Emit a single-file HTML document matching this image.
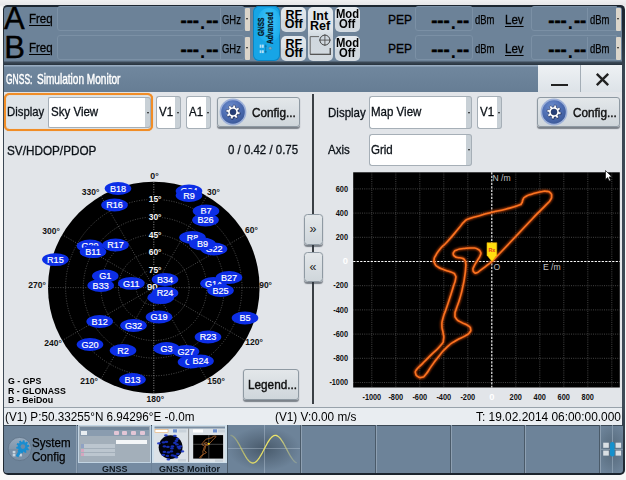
<!DOCTYPE html>
<html><head><meta charset="utf-8"><title>GNSS Simulation Monitor</title>
<style>
html,body{margin:0;padding:0;background:#f8f8f8;}
body{width:626px;height:480px;position:relative;overflow:hidden;font-family:"Liberation Sans",sans-serif;color:#000;}
#root,#root div,#root span,#root svg{position:absolute;}
#root{left:0;top:0;width:626px;height:480px;overflow:hidden;}
.t{white-space:nowrap;line-height:1;transform-origin:0 0;}
.fld{border:1px solid #7b90a5;border-radius:3px;background:#6c8298;box-sizing:border-box;}
.hbtn{background:linear-gradient(#e4e9ed 0%,#dde3e8 45%,#cfd7de 55%,#d3dae0 100%);border-radius:5px;box-sizing:border-box;}
.hbtn .t{font-weight:bold;font-size:12.5px;}
.beige{background:#dbd5ca;border-radius:1px;}
.combo{background:#fff;border:1px solid #a6afb7;box-sizing:border-box;border-radius:2px;}
.carr{background:#c8d0d6;border:1px solid #a6afb7;border-left:none;box-sizing:border-box;border-radius:0 3px 3px 0;}
.btn{background:linear-gradient(#e3e7ea,#cfd6db);border:1px solid #8f9aa3;border-radius:3px;box-sizing:border-box;box-shadow:0 1.5px 1px rgba(40,50,60,.55);}
.dash{font-weight:bold;font-size:18.5px;-webkit-text-stroke:.4px #000;margin-top:.4px;}
.unit{font-size:12.3px;transform:scaleX(.77);-webkit-text-stroke:.25px #000;}
.lbl{font-size:12px;transform:scaleX(.96);-webkit-text-stroke:.3px #000;text-underline-offset:1.8px;text-decoration-thickness:1px;}
.pl{font-size:12.4px;transform:scaleX(.93);-webkit-text-stroke:.3px #0c1218;color:#0c1218;}
.cfg{font-size:12.2px;transform:scaleX(.965);-webkit-text-stroke:.42px #111;color:#111;}
svg text{font-family:"Liberation Sans",sans-serif;}
</style></head><body>
<div id="root">
<!-- FRAME -->
<div style="left:0;top:0;width:626px;height:7px;background:linear-gradient(#f0f0f1,#e6e6e8 70%,#f8f8f8);"></div>
<div style="left:3.1px;top:5px;width:621.5px;height:469.6px;background:linear-gradient(to bottom,#1c2630 0,#1f2933 20px,#3a4652 66px,#3f4b57 400px,#2a3540 440px,#1a232c 100%);border-radius:4.5px 4.5px 5px 5px;"></div>
<div style="left:4.2px;top:6.6px;width:617.8px;height:466.4px;background:#6d8399;border-radius:3px 3px 3px 3px;"></div>

<div id="hdr" style="left:0;top:0;width:626px;height:66px;">
<div class="t " style="left:4.1px;top:3.2px;font-size:31px;-webkit-text-stroke:.4px #000;">A</div>
<div class="t " style="left:4.2px;top:32.4px;font-size:31px;-webkit-text-stroke:.4px #000;">B</div>
<div class="fld" style="left:57px;top:6.4px;width:188px;height:25px;"></div>
<div style="left:220px;top:8px;width:1px;height:23px;background:#7b90a5;"></div>
<div class="t dash" style="left:180.5px;top:11.5px;">---<span style="position:relative;top:1.7px;padding:0 1px 0 1px;-webkit-text-stroke:0;">.</span>--</div>
<div class="t unit" style="left:222px;top:14px;">GHz</div>
<div class="beige" style="left:244.5px;top:8px;width:5.5px;height:23px;"></div>
<div style="left:246px;top:18px;width:0;height:0;border-left:1.5px solid transparent;border-right:1.5px solid transparent;border-top:2px solid #222;"></div>
<div class="t lbl" style="left:388px;top:13.8px;transform:scaleX(1);font-size:12px;">PEP</div>
<div class="fld" style="left:415px;top:6.4px;width:58px;height:25px;"></div>
<div class="t dash" style="left:431.2px;top:11.5px;">---<span style="position:relative;top:1.7px;padding:0 1px 0 1px;-webkit-text-stroke:0;">.</span>--</div>
<div class="t unit" style="left:475px;top:14px;">dBm</div>
<div class="t lbl" style="left:505px;top:13.5px;text-decoration:underline;">Lev</div>
<div class="fld" style="left:531px;top:6.4px;width:86px;height:25px;border-radius:3px 0 0 3px;"></div>
<div style="left:587px;top:8px;width:1px;height:23px;background:#7b90a5;"></div>
<div class="t dash" style="left:548.3px;top:11.5px;">---<span style="position:relative;top:1.7px;padding:0 1px 0 1px;-webkit-text-stroke:0;">.</span>--</div>
<div class="t unit" style="left:589.6px;top:14px;">dBm</div>
<div class="beige" style="left:616px;top:7.7px;width:5.2px;height:23px;"></div>
<div style="left:617.3px;top:18px;width:0;height:0;border-left:1.5px solid transparent;border-right:1.5px solid transparent;border-top:2px solid #222;"></div>
<div class="t lbl" style="left:28.8px;top:12.9px;text-decoration:underline;">Freq</div>
<div class="fld" style="left:57px;top:35.4px;width:188px;height:25px;"></div>
<div style="left:220px;top:37px;width:1px;height:23px;background:#7b90a5;"></div>
<div class="t dash" style="left:180.5px;top:40.5px;">---<span style="position:relative;top:1.7px;padding:0 1px 0 1px;-webkit-text-stroke:0;">.</span>--</div>
<div class="t unit" style="left:222px;top:43px;">GHz</div>
<div class="beige" style="left:244.5px;top:37px;width:5.5px;height:23px;"></div>
<div style="left:246px;top:47px;width:0;height:0;border-left:1.5px solid transparent;border-right:1.5px solid transparent;border-top:2px solid #222;"></div>
<div class="t lbl" style="left:388px;top:42.8px;transform:scaleX(1);font-size:12px;">PEP</div>
<div class="fld" style="left:415px;top:35.4px;width:58px;height:25px;"></div>
<div class="t dash" style="left:431.2px;top:40.5px;">---<span style="position:relative;top:1.7px;padding:0 1px 0 1px;-webkit-text-stroke:0;">.</span>--</div>
<div class="t unit" style="left:475px;top:43px;">dBm</div>
<div class="t lbl" style="left:505px;top:42.5px;text-decoration:underline;">Lev</div>
<div class="fld" style="left:531px;top:35.4px;width:86px;height:25px;border-radius:3px 0 0 3px;"></div>
<div style="left:587px;top:37px;width:1px;height:23px;background:#7b90a5;"></div>
<div class="t dash" style="left:548.3px;top:40.5px;">---<span style="position:relative;top:1.7px;padding:0 1px 0 1px;-webkit-text-stroke:0;">.</span>--</div>
<div class="t unit" style="left:589.6px;top:43px;">dBm</div>
<div class="beige" style="left:616px;top:36.7px;width:5.2px;height:23px;"></div>
<div style="left:617.3px;top:47px;width:0;height:0;border-left:1.5px solid transparent;border-right:1.5px solid transparent;border-top:2px solid #222;"></div>
<div class="t lbl" style="left:28.8px;top:41.9px;text-decoration:underline;">Freq</div>
<div style="left:253px;top:6.3px;width:27.3px;height:55.2px;border-radius:6px;background:#17a5e6;box-shadow:inset 0 0 0 1px #0c84c2;overflow:hidden;"><div style="left:5px;top:2px;width:22px;height:34px;border-radius:11px;background:radial-gradient(ellipse at 50% 40%,#43c4f7,#1fb0ee 70%,rgba(23,165,230,0) 100%);"></div></div>
<div class="t" style="left:255.8px;top:36px;font-size:9.4px;font-weight:bold;transform:rotate(-90deg) scaleX(.69);color:#06121c;-webkit-text-stroke:.25px #06121c;">GNSS</div>
<div class="t" style="left:265.2px;top:43.5px;font-size:9.4px;font-weight:bold;transform:rotate(-90deg) scaleX(.71);color:#06121c;-webkit-text-stroke:.25px #06121c;">Advanced</div>
<svg style="left:256px;top:42px" width="22" height="16" viewBox="256 42 22 16"><g fill="#b4e0f6"><rect x="259.7" y="44.6" width="1.8" height="3.2"/><rect x="262" y="44.6" width="1.8" height="3.2"/><rect x="259.7" y="50.3" width="1.8" height="2.8"/><rect x="262" y="50.3" width="1.8" height="2.8"/></g><path d="M265.7 44.5V53.2M264.6 46.2H266.8M264.6 51.7H266.8" stroke="#0d5f8c" stroke-width=".6" fill="none"/><circle cx="270.2" cy="48.2" r="1.5" fill="#7da7bd" stroke="#3c7897" stroke-width=".4"/></svg>

<div class="hbtn" style="left:281.2px;top:7.3px;width:25.3px;height:24.3px;"><div class="t" style="left:4.3px;top:1.5px;transform:scaleX(1);">RF</div><div class="t" style="left:3.5px;top:11px;transform:scaleX(1);">Off</div></div>
<div class="hbtn" style="left:281.2px;top:35.5px;width:25.3px;height:25.5px;"><div class="t" style="left:4.3px;top:2.2px;transform:scaleX(1);">RF</div><div class="t" style="left:3.5px;top:11.8px;transform:scaleX(1);">Off</div></div>
<div class="hbtn" style="left:307.5px;top:7.3px;width:25px;height:53.7px;"><div class="t" style="left:5.3px;top:2.8px;">Int</div><div class="t" style="left:2.5px;top:12.8px;">Ref</div><svg style="left:0;top:26px" width="25" height="25" viewBox="0 0 25 25"><path d="M11 3.6H2.2V21.4H22.3V15" fill="none" stroke="#666" stroke-width="1"/><path d="M2.2 21.4H22.3V15" fill="none" stroke="#555" stroke-width="1.3"/><circle cx="16.9" cy="7.1" r="5" fill="none" stroke="#444" stroke-width="1"/><path d="M16.9 1.2V13M11 7.1H22.8" stroke="#444" stroke-width=".8"/></svg></div>
<div class="hbtn" style="left:334.7px;top:7.3px;width:25.5px;height:24.3px;"><div class="t" style="left:1.2px;top:.9px;transform:scaleX(0.9);">Mod</div><div class="t" style="left:4.2px;top:11px;transform:scaleX(0.9);">Off</div></div>
<div class="hbtn" style="left:334.7px;top:35.5px;width:25.5px;height:25.5px;"><div class="t" style="left:1.2px;top:1.6px;transform:scaleX(0.9);">Mod</div><div class="t" style="left:4.2px;top:11.8px;transform:scaleX(0.9);">Off</div></div>
</div>
<div style="left:4.2px;top:61.2px;width:617.8px;height:3.8px;background:linear-gradient(#63778b,#3a4856 35%,#27323d);"></div>
<!-- TITLE BAR -->
<div id="tbar" style="left:4.2px;top:65px;width:617.8px;height:27.3px;background:linear-gradient(#9db1c5 0,#8ea3b8 1.2px,#70879e 2.2px,#667d94 100%);"></div>
<div class="t" style="left:5.6px;top:71.5px;font-size:14.5px;color:#fff;transform:scaleX(.585);-webkit-text-stroke:.5px #fff;">GNSS:</div>
<div class="t" style="left:36.6px;top:71.5px;font-size:14.5px;color:#fff;transform:scaleX(.695);-webkit-text-stroke:.45px #fff;">Simulation Monitor</div>
<div style="left:538px;top:65.4px;width:43px;height:26.8px;background:linear-gradient(#eef1f4,#dde3e8);border-right:1px solid #a3adb6;box-sizing:border-box;"></div>
<div style="left:581px;top:65.4px;width:41px;height:26.8px;background:linear-gradient(#eef1f4,#dde3e8);"></div>
<div style="left:551px;top:84px;width:17px;height:2px;background:#222;"></div>
<svg style="left:593.6px;top:70.5px" width="17" height="17" viewBox="0 0 17 17"><path d="M2.8 2.9L14.2 14.2M14.2 2.9L2.8 14.2" stroke="#222" stroke-width="2.4" fill="none"/></svg>
<!-- PANEL -->
<div id="panel" style="left:4.1px;top:92px;width:617.9px;height:315px;background:#e2e5e9;"></div>
<div style="left:312.2px;top:94px;width:1.6px;height:309.7px;background:#3a3f44;"></div>

<div style="left:4.3px;top:93.4px;width:149.2px;height:38px;border:2.7px solid #f18d26;box-shadow:0 0 .7px #f18d26,inset 0 0 .7px #f18d26;border-radius:5.5px;box-sizing:border-box;background:#dfe4e8;"></div>
<div class="combo" style="left:48.4px;top:96.7px;width:97px;height:31.2px;border-radius:2px 0 0 2px;border-right:none;"></div>
<div class="carr" style="left:145.2px;top:96.7px;width:6px;height:31.2px;"></div>
<div class="combo" style="left:156.2px;top:96.2px;width:19px;height:32.4px;border-right:none;border-radius:3px 0 0 3px;"></div>
<div class="carr" style="left:175.2px;top:96.2px;width:6.2px;height:32.4px;"></div>
<div class="combo" style="left:186.1px;top:96.2px;width:19.6px;height:32.4px;border-right:none;border-radius:3px 0 0 3px;"></div>
<div class="carr" style="left:205.7px;top:96.2px;width:5.8px;height:32.4px;"></div>
<div class="btn" style="left:217px;top:96.6px;width:82.6px;height:30.6px;"></div>

<div class="t pl" style="left:7.2px;top:106.4px;transform:scaleX(.915);">Display</div>
<div class="t pl" style="left:50.6px;top:106.4px;">Sky View</div>
<div class="t pl" style="left:159px;top:106.4px;">V1</div>
<div class="t pl" style="left:189px;top:106.4px;">A1</div>
<div class="t cfg" style="left:252.4px;top:106.6px;">Config...</div>
<div class="t pl" style="left:7.2px;top:144.5px;transform:scaleX(.948);">SV/HDOP/PDOP</div>
<div class="t pl" style="left:228.2px;top:144.2px;transform:scaleX(.925);">0 / 0.42 / 0.75</div>
<div style="left:146.6px;top:111.5px;width:0;height:0;border-left:1.9px solid transparent;border-right:1.9px solid transparent;border-top:2.2px solid #1a1a1a;"></div>
<div style="left:176.5px;top:111.5px;width:0;height:0;border-left:1.9px solid transparent;border-right:1.9px solid transparent;border-top:2.2px solid #1a1a1a;"></div>
<div style="left:207px;top:111.5px;width:0;height:0;border-left:1.9px solid transparent;border-right:1.9px solid transparent;border-top:2.2px solid #1a1a1a;"></div>
<svg style="left:217.5px;top:97px" width="30" height="30" viewBox="-15 -15 30 30"><defs><radialGradient id="g232" cx="40%" cy="30%" r="75%"><stop offset="0" stop-color="#6f8fcd"/><stop offset=".55" stop-color="#4d6db3"/><stop offset="1" stop-color="#3b5897"/></radialGradient></defs><circle r="13.4" fill="#9db0d8"/><circle r="11.8" fill="url(#g232)"/><path d="M-1.23 -4.95 L-1.17 -7.00 L1.17 -7.00 L1.23 -4.95 L2.63 -4.37 L4.13 -5.78 L5.78 -4.13 L4.37 -2.63 L4.95 -1.23 L7.00 -1.17 L7.00 1.17 L4.95 1.23 L4.37 2.63 L5.78 4.13 L4.13 5.78 L2.63 4.37 L1.23 4.95 L1.17 7.00 L-1.17 7.00 L-1.23 4.95 L-2.63 4.37 L-4.13 5.78 L-5.78 4.13 L-4.37 2.63 L-4.95 1.23 L-7.00 1.17 L-7.00 -1.17 L-4.95 -1.23 L-4.37 -2.63 L-5.78 -4.13 L-4.13 -5.78 L-2.63 -4.37Z" transform="translate(.5,.6) rotate(12)" fill="#1a2a50" opacity=".8"/><path d="M-1.23 -4.95 L-1.17 -7.00 L1.17 -7.00 L1.23 -4.95 L2.63 -4.37 L4.13 -5.78 L5.78 -4.13 L4.37 -2.63 L4.95 -1.23 L7.00 -1.17 L7.00 1.17 L4.95 1.23 L4.37 2.63 L5.78 4.13 L4.13 5.78 L2.63 4.37 L1.23 4.95 L1.17 7.00 L-1.17 7.00 L-1.23 4.95 L-2.63 4.37 L-4.13 5.78 L-5.78 4.13 L-4.37 2.63 L-4.95 1.23 L-7.00 1.17 L-7.00 -1.17 L-4.95 -1.23 L-4.37 -2.63 L-5.78 -4.13 L-4.13 -5.78 L-2.63 -4.37Z" transform="rotate(12)" fill="#fff" stroke="#1f3160" stroke-width=".5" stroke-linejoin="round"/><circle r="3" fill="#263f78" stroke="#1a2a50" stroke-width=".5"/></svg>
<div class="combo" style="left:368.8px;top:96.2px;width:97.6px;height:32.4px;border-radius:3px 0 0 3px;border-right:none;"></div>
<div class="carr" style="left:466.2px;top:96.2px;width:5.8px;height:32.4px;"></div>
<div class="combo" style="left:368.8px;top:133.7px;width:97.6px;height:32.8px;border-radius:3px 0 0 3px;border-right:none;"></div>
<div class="carr" style="left:466.2px;top:133.7px;width:5.8px;height:32.8px;"></div>
<div class="combo" style="left:477px;top:96.2px;width:19.6px;height:32.4px;border-right:none;border-radius:3px 0 0 3px;"></div>
<div class="carr" style="left:496.6px;top:96.2px;width:5.6px;height:32.4px;"></div>
<div class="btn" style="left:537.4px;top:96.8px;width:82.5px;height:30.4px;"></div>

<div class="t pl" style="left:327.9px;top:106.9px;">Display</div>
<div class="t pl" style="left:371.3px;top:106.4px;">Map View</div>
<div class="t pl" style="left:480px;top:106.4px;">V1</div>
<div class="t cfg" style="left:573.2px;top:106.6px;">Config...</div>
<div class="t pl" style="left:327.9px;top:144px;">Axis</div>
<div class="t pl" style="left:371.3px;top:144px;">Grid</div>
<div style="left:467.5px;top:111.5px;width:0;height:0;border-left:1.9px solid transparent;border-right:1.9px solid transparent;border-top:2.2px solid #1a1a1a;"></div>
<div style="left:498px;top:111.5px;width:0;height:0;border-left:1.9px solid transparent;border-right:1.9px solid transparent;border-top:2.2px solid #1a1a1a;"></div>
<div style="left:467.5px;top:149px;width:0;height:0;border-left:1.9px solid transparent;border-right:1.9px solid transparent;border-top:2.2px solid #1a1a1a;"></div>
<svg style="left:538.6px;top:97px" width="30" height="30" viewBox="-15 -15 30 30"><defs><radialGradient id="g553" cx="40%" cy="30%" r="75%"><stop offset="0" stop-color="#6f8fcd"/><stop offset=".55" stop-color="#4d6db3"/><stop offset="1" stop-color="#3b5897"/></radialGradient></defs><circle r="13.4" fill="#9db0d8"/><circle r="11.8" fill="url(#g553)"/><path d="M-1.23 -4.95 L-1.17 -7.00 L1.17 -7.00 L1.23 -4.95 L2.63 -4.37 L4.13 -5.78 L5.78 -4.13 L4.37 -2.63 L4.95 -1.23 L7.00 -1.17 L7.00 1.17 L4.95 1.23 L4.37 2.63 L5.78 4.13 L4.13 5.78 L2.63 4.37 L1.23 4.95 L1.17 7.00 L-1.17 7.00 L-1.23 4.95 L-2.63 4.37 L-4.13 5.78 L-5.78 4.13 L-4.37 2.63 L-4.95 1.23 L-7.00 1.17 L-7.00 -1.17 L-4.95 -1.23 L-4.37 -2.63 L-5.78 -4.13 L-4.13 -5.78 L-2.63 -4.37Z" transform="translate(.5,.6) rotate(12)" fill="#1a2a50" opacity=".8"/><path d="M-1.23 -4.95 L-1.17 -7.00 L1.17 -7.00 L1.23 -4.95 L2.63 -4.37 L4.13 -5.78 L5.78 -4.13 L4.37 -2.63 L4.95 -1.23 L7.00 -1.17 L7.00 1.17 L4.95 1.23 L4.37 2.63 L5.78 4.13 L4.13 5.78 L2.63 4.37 L1.23 4.95 L1.17 7.00 L-1.17 7.00 L-1.23 4.95 L-2.63 4.37 L-4.13 5.78 L-5.78 4.13 L-4.37 2.63 L-4.95 1.23 L-7.00 1.17 L-7.00 -1.17 L-4.95 -1.23 L-4.37 -2.63 L-5.78 -4.13 L-4.13 -5.78 L-2.63 -4.37Z" transform="rotate(12)" fill="#fff" stroke="#1f3160" stroke-width=".5" stroke-linejoin="round"/><circle r="3" fill="#263f78" stroke="#1a2a50" stroke-width=".5"/></svg>
<div class="btn" style="left:304px;top:213.5px;width:18.6px;height:31.6px;border-radius:3.5px;"></div>
<div class="btn" style="left:304px;top:251.7px;width:18.6px;height:30.6px;border-radius:3.5px;"></div>
<div class="t " style="left:309.6px;top:223.2px;font-size:12.5px;color:#222;">»</div>
<div class="t " style="left:309.6px;top:261.2px;font-size:12.5px;color:#222;">«</div>
<div class="btn" style="left:243.4px;top:369.2px;width:55.8px;height:30.6px;"></div>
<div class="t cfg" style="left:247.6px;top:378.5px;">Legend...</div>
<div class="t " style="left:7.5px;top:377px;font-size:9.1px;font-weight:bold;transform:scaleX(.97);">G - GPS</div>
<div class="t " style="left:7.5px;top:386.5px;font-size:9.1px;font-weight:bold;transform:scaleX(.97);">R - GLONASS</div>
<div class="t " style="left:7.5px;top:395.8px;font-size:9.1px;font-weight:bold;transform:scaleX(.97);">B - BeiDou</div>
<svg style="left:0;top:165px" width="320" height="240" viewBox="0 165 320 240">
<defs><filter id="eb" x="-10%" y="-20%" width="120%" height="140%"><feGaussianBlur stdDeviation=".65"/></filter></defs>
<circle cx="153.8" cy="287.6" r="105.8" fill="#000"/>
<circle cx="153.8" cy="287.6" r="17.6" fill="none" stroke="#707070" stroke-width=".7" stroke-dasharray="1 1.5"/>
<circle cx="153.8" cy="287.6" r="35.3" fill="none" stroke="#707070" stroke-width=".7" stroke-dasharray="1 1.5"/>
<circle cx="153.8" cy="287.6" r="52.9" fill="none" stroke="#707070" stroke-width=".7" stroke-dasharray="1 1.5"/>
<circle cx="153.8" cy="287.6" r="70.5" fill="none" stroke="#707070" stroke-width=".7" stroke-dasharray="1 1.5"/>
<circle cx="153.8" cy="287.6" r="88.2" fill="none" stroke="#707070" stroke-width=".7" stroke-dasharray="1 1.5"/>
<line x1="153.8" y1="287.6" x2="153.8" y2="181.8" stroke="#c8c8c8" stroke-width=".7" stroke-dasharray="1 1.5"/>
<line x1="153.8" y1="287.6" x2="206.7" y2="196.0" stroke="#707070" stroke-width=".7" stroke-dasharray="1 1.5"/>
<line x1="153.8" y1="287.6" x2="245.4" y2="234.7" stroke="#707070" stroke-width=".7" stroke-dasharray="1 1.5"/>
<line x1="153.8" y1="287.6" x2="259.6" y2="287.6" stroke="#707070" stroke-width=".7" stroke-dasharray="1 1.5"/>
<line x1="153.8" y1="287.6" x2="245.4" y2="340.5" stroke="#707070" stroke-width=".7" stroke-dasharray="1 1.5"/>
<line x1="153.8" y1="287.6" x2="206.7" y2="379.2" stroke="#707070" stroke-width=".7" stroke-dasharray="1 1.5"/>
<line x1="153.8" y1="287.6" x2="153.8" y2="393.4" stroke="#c8c8c8" stroke-width=".7" stroke-dasharray="1 1.5"/>
<line x1="153.8" y1="287.6" x2="100.9" y2="379.2" stroke="#707070" stroke-width=".7" stroke-dasharray="1 1.5"/>
<line x1="153.8" y1="287.6" x2="62.2" y2="340.5" stroke="#707070" stroke-width=".7" stroke-dasharray="1 1.5"/>
<line x1="153.8" y1="287.6" x2="48.0" y2="287.6" stroke="#707070" stroke-width=".7" stroke-dasharray="1 1.5"/>
<line x1="153.8" y1="287.6" x2="62.2" y2="234.7" stroke="#707070" stroke-width=".7" stroke-dasharray="1 1.5"/>
<line x1="153.8" y1="287.6" x2="100.9" y2="196.0" stroke="#707070" stroke-width=".7" stroke-dasharray="1 1.5"/>
<text x="154.5" y="178.7" font-size="9.6" font-weight="bold" text-anchor="middle" fill="#111" textLength="8.4" lengthAdjust="spacingAndGlyphs">0°</text>
<text x="213.5" y="195" font-size="9.6" font-weight="bold" text-anchor="middle" fill="#111" textLength="12.8" lengthAdjust="spacingAndGlyphs">30°</text>
<text x="251.5" y="233.3" font-size="9.6" font-weight="bold" text-anchor="middle" fill="#111" textLength="12.8" lengthAdjust="spacingAndGlyphs">60°</text>
<text x="265.6" y="288.2" font-size="9.6" font-weight="bold" text-anchor="middle" fill="#111" textLength="12.8" lengthAdjust="spacingAndGlyphs">90°</text>
<text x="254" y="345.2" font-size="9.6" font-weight="bold" text-anchor="middle" fill="#111" textLength="17.6" lengthAdjust="spacingAndGlyphs">120°</text>
<text x="216" y="383.5" font-size="9.6" font-weight="bold" text-anchor="middle" fill="#111" textLength="17.6" lengthAdjust="spacingAndGlyphs">150°</text>
<text x="155.3" y="401.6" font-size="9.6" font-weight="bold" text-anchor="middle" fill="#111" textLength="17.6" lengthAdjust="spacingAndGlyphs">180°</text>
<text x="89" y="383.6" font-size="9.6" font-weight="bold" text-anchor="middle" fill="#111" textLength="17.6" lengthAdjust="spacingAndGlyphs">210°</text>
<text x="53" y="346" font-size="9.6" font-weight="bold" text-anchor="middle" fill="#111" textLength="17.6" lengthAdjust="spacingAndGlyphs">240°</text>
<text x="37" y="288.3" font-size="9.6" font-weight="bold" text-anchor="middle" fill="#111" textLength="17.6" lengthAdjust="spacingAndGlyphs">270°</text>
<text x="51" y="234" font-size="9.6" font-weight="bold" text-anchor="middle" fill="#111" textLength="17.6" lengthAdjust="spacingAndGlyphs">300°</text>
<text x="90.5" y="195" font-size="9.6" font-weight="bold" text-anchor="middle" fill="#111" textLength="17.6" lengthAdjust="spacingAndGlyphs">330°</text>
<rect x="147.3" y="194.8" width="15" height="8.5" fill="#000"/>
<text x="155.10000000000002" y="202.3" font-size="9.6" font-weight="bold" text-anchor="middle" fill="#f4f4f4" textLength="12.8" lengthAdjust="spacingAndGlyphs">15°</text>
<rect x="147.3" y="212.5" width="15" height="8.5" fill="#000"/>
<text x="155.10000000000002" y="220.0" font-size="9.6" font-weight="bold" text-anchor="middle" fill="#f4f4f4" textLength="12.8" lengthAdjust="spacingAndGlyphs">30°</text>
<rect x="147.3" y="230.1" width="15" height="8.5" fill="#000"/>
<text x="155.10000000000002" y="237.6" font-size="9.6" font-weight="bold" text-anchor="middle" fill="#f4f4f4" textLength="12.8" lengthAdjust="spacingAndGlyphs">45°</text>
<rect x="147.3" y="247.7" width="15" height="8.5" fill="#000"/>
<text x="155.10000000000002" y="255.2" font-size="9.6" font-weight="bold" text-anchor="middle" fill="#f4f4f4" textLength="12.8" lengthAdjust="spacingAndGlyphs">60°</text>
<rect x="147.3" y="265.4" width="15" height="8.5" fill="#000"/>
<text x="155.10000000000002" y="272.9" font-size="9.6" font-weight="bold" text-anchor="middle" fill="#f4f4f4" textLength="12.8" lengthAdjust="spacingAndGlyphs">75°</text>
<text x="152.20000000000002" y="290.0" font-size="9.4" text-anchor="middle" fill="#fff" stroke="#fff" stroke-width=".25">90</text>
<ellipse cx="118" cy="188.5" rx="13.3" ry="6.4" fill="#0a2ee6" filter="url(#eb)"/><text x="118" y="191.9" font-size="9.1" text-anchor="middle" fill="#fff" stroke="#fff" stroke-width=".2">B18</text>
<ellipse cx="114.5" cy="205" rx="13.3" ry="6.4" fill="#0a2ee6" filter="url(#eb)"/><text x="114.5" y="208.4" font-size="9.1" text-anchor="middle" fill="#fff" stroke="#fff" stroke-width=".2">R16</text>
<ellipse cx="189" cy="191" rx="13.3" ry="6.4" fill="#0a2ee6" filter="url(#eb)"/><text x="189" y="194.4" font-size="9.1" text-anchor="middle" fill="#fff" stroke="#fff" stroke-width=".2">G24</text>
<ellipse cx="189" cy="195.5" rx="13.3" ry="6.4" fill="#0a2ee6" filter="url(#eb)"/><text x="189" y="198.9" font-size="9.1" text-anchor="middle" fill="#fff" stroke="#fff" stroke-width=".2">R9</text>
<ellipse cx="206" cy="211" rx="13.3" ry="6.4" fill="#0a2ee6" filter="url(#eb)"/><text x="206" y="214.4" font-size="9.1" text-anchor="middle" fill="#fff" stroke="#fff" stroke-width=".2">B7</text>
<ellipse cx="205.5" cy="220" rx="13.3" ry="6.4" fill="#0a2ee6" filter="url(#eb)"/><text x="205.5" y="223.4" font-size="9.1" text-anchor="middle" fill="#fff" stroke="#fff" stroke-width=".2">B26</text>
<ellipse cx="192.5" cy="237.5" rx="13.3" ry="6.4" fill="#0a2ee6" filter="url(#eb)"/><text x="192.5" y="240.9" font-size="9.1" text-anchor="middle" fill="#fff" stroke="#fff" stroke-width=".2">R8</text>
<ellipse cx="214" cy="249" rx="13.3" ry="6.4" fill="#0a2ee6" filter="url(#eb)"/><text x="214" y="252.4" font-size="9.1" text-anchor="middle" fill="#fff" stroke="#fff" stroke-width=".2">G22</text>
<ellipse cx="202.5" cy="244" rx="13.3" ry="6.4" fill="#0a2ee6" filter="url(#eb)"/><text x="202.5" y="247.4" font-size="9.1" text-anchor="middle" fill="#fff" stroke="#fff" stroke-width=".2">B9</text>
<ellipse cx="55.4" cy="259.6" rx="13.3" ry="6.4" fill="#0a2ee6" filter="url(#eb)"/><text x="55.4" y="263.0" font-size="9.1" text-anchor="middle" fill="#fff" stroke="#fff" stroke-width=".2">R15</text>
<ellipse cx="90" cy="246" rx="13.3" ry="6.4" fill="#0a2ee6" filter="url(#eb)"/><text x="90" y="249.4" font-size="9.1" text-anchor="middle" fill="#fff" stroke="#fff" stroke-width=".2">G29</text>
<ellipse cx="115.5" cy="245" rx="13.3" ry="6.4" fill="#0a2ee6" filter="url(#eb)"/><text x="115.5" y="248.4" font-size="9.1" text-anchor="middle" fill="#fff" stroke="#fff" stroke-width=".2">R17</text>
<ellipse cx="93" cy="251.7" rx="13.3" ry="6.4" fill="#0a2ee6" filter="url(#eb)"/><text x="93" y="255.1" font-size="9.1" text-anchor="middle" fill="#fff" stroke="#fff" stroke-width=".2">B11</text>
<ellipse cx="105.3" cy="276" rx="13.3" ry="6.4" fill="#0a2ee6" filter="url(#eb)"/><text x="105.3" y="279.4" font-size="9.1" text-anchor="middle" fill="#fff" stroke="#fff" stroke-width=".2">G1</text>
<ellipse cx="100.7" cy="285.5" rx="13.3" ry="6.4" fill="#0a2ee6" filter="url(#eb)"/><text x="100.7" y="288.9" font-size="9.1" text-anchor="middle" fill="#fff" stroke="#fff" stroke-width=".2">B33</text>
<ellipse cx="131.3" cy="283.4" rx="13.3" ry="6.4" fill="#0a2ee6" filter="url(#eb)"/><text x="131.3" y="286.79999999999995" font-size="9.1" text-anchor="middle" fill="#fff" stroke="#fff" stroke-width=".2">G11</text>
<ellipse cx="165" cy="279.5" rx="13.3" ry="6.4" fill="#0a2ee6" filter="url(#eb)"/><text x="165" y="282.9" font-size="9.1" text-anchor="middle" fill="#fff" stroke="#fff" stroke-width=".2">B34</text>
<ellipse cx="160.8" cy="297.6" rx="13.3" ry="6.4" fill="#0a2ee6" filter="url(#eb)"/><text x="160.8" y="301.0" font-size="9.1" text-anchor="middle" fill="#fff" stroke="#fff" stroke-width=".2"></text>
<ellipse cx="165" cy="293" rx="13.3" ry="6.4" fill="#0a2ee6" filter="url(#eb)"/><text x="165" y="296.4" font-size="9.1" text-anchor="middle" fill="#fff" stroke="#fff" stroke-width=".2">R24</text>
<ellipse cx="213.5" cy="283.5" rx="13.3" ry="6.4" fill="#0a2ee6" filter="url(#eb)"/><text x="213.5" y="286.9" font-size="9.1" text-anchor="middle" fill="#fff" stroke="#fff" stroke-width=".2">G14</text>
<ellipse cx="229" cy="277.5" rx="13.3" ry="6.4" fill="#0a2ee6" filter="url(#eb)"/><text x="229" y="280.9" font-size="9.1" text-anchor="middle" fill="#fff" stroke="#fff" stroke-width=".2">B27</text>
<ellipse cx="220.5" cy="290.5" rx="13.3" ry="6.4" fill="#0a2ee6" filter="url(#eb)"/><text x="220.5" y="293.9" font-size="9.1" text-anchor="middle" fill="#fff" stroke="#fff" stroke-width=".2">B25</text>
<ellipse cx="99.7" cy="321.5" rx="13.3" ry="6.4" fill="#0a2ee6" filter="url(#eb)"/><text x="99.7" y="324.9" font-size="9.1" text-anchor="middle" fill="#fff" stroke="#fff" stroke-width=".2">B12</text>
<ellipse cx="133.5" cy="325.5" rx="13.3" ry="6.4" fill="#0a2ee6" filter="url(#eb)"/><text x="133.5" y="328.9" font-size="9.1" text-anchor="middle" fill="#fff" stroke="#fff" stroke-width=".2">G32</text>
<ellipse cx="159" cy="317" rx="13.3" ry="6.4" fill="#0a2ee6" filter="url(#eb)"/><text x="159" y="320.4" font-size="9.1" text-anchor="middle" fill="#fff" stroke="#fff" stroke-width=".2">G19</text>
<ellipse cx="245" cy="318" rx="13.3" ry="6.4" fill="#0a2ee6" filter="url(#eb)"/><text x="245" y="321.4" font-size="9.1" text-anchor="middle" fill="#fff" stroke="#fff" stroke-width=".2">B5</text>
<ellipse cx="208" cy="337" rx="13.3" ry="6.4" fill="#0a2ee6" filter="url(#eb)"/><text x="208" y="340.4" font-size="9.1" text-anchor="middle" fill="#fff" stroke="#fff" stroke-width=".2">R23</text>
<ellipse cx="90" cy="344.5" rx="13.3" ry="6.4" fill="#0a2ee6" filter="url(#eb)"/><text x="90" y="347.9" font-size="9.1" text-anchor="middle" fill="#fff" stroke="#fff" stroke-width=".2">G20</text>
<ellipse cx="123" cy="350.5" rx="13.3" ry="6.4" fill="#0a2ee6" filter="url(#eb)"/><text x="123" y="353.9" font-size="9.1" text-anchor="middle" fill="#fff" stroke="#fff" stroke-width=".2">R2</text>
<ellipse cx="166.5" cy="348.5" rx="13.3" ry="6.4" fill="#0a2ee6" filter="url(#eb)"/><text x="166.5" y="351.9" font-size="9.1" text-anchor="middle" fill="#fff" stroke="#fff" stroke-width=".2">G3</text>
<ellipse cx="186" cy="351.5" rx="13.3" ry="6.4" fill="#0a2ee6" filter="url(#eb)"/><text x="186" y="354.9" font-size="9.1" text-anchor="middle" fill="#fff" stroke="#fff" stroke-width=".2">G27</text>
<ellipse cx="191" cy="362" rx="13.3" ry="6.4" fill="#0a2ee6" filter="url(#eb)"/><text x="191" y="365.4" font-size="9.1" text-anchor="middle" fill="#fff" stroke="#fff" stroke-width=".2">G6</text>
<ellipse cx="200.5" cy="361" rx="13.3" ry="6.4" fill="#0a2ee6" filter="url(#eb)"/><text x="200.5" y="364.4" font-size="9.1" text-anchor="middle" fill="#fff" stroke="#fff" stroke-width=".2">B24</text>
<ellipse cx="132.5" cy="379.5" rx="13.3" ry="6.4" fill="#0a2ee6" filter="url(#eb)"/><text x="132.5" y="382.9" font-size="9.1" text-anchor="middle" fill="#fff" stroke="#fff" stroke-width=".2">B13</text>
</svg>
<svg style="left:320px;top:165px" width="306" height="240" viewBox="320 165 306 240">
<defs><filter id="glow" x="-10%" y="-10%" width="120%" height="120%"><feGaussianBlur stdDeviation="1.1"/></filter></defs>
<rect x="353.2" y="172.3" width="266.6" height="215.2" fill="#000"/>
<line x1="371.8" y1="172.3" x2="371.8" y2="387.5" stroke="#626262" stroke-width=".7" stroke-dasharray="1 1.2"/>
<line x1="395.8" y1="172.3" x2="395.8" y2="387.5" stroke="#626262" stroke-width=".7" stroke-dasharray="1 1.2"/>
<line x1="419.8" y1="172.3" x2="419.8" y2="387.5" stroke="#626262" stroke-width=".7" stroke-dasharray="1 1.2"/>
<line x1="443.8" y1="172.3" x2="443.8" y2="387.5" stroke="#626262" stroke-width=".7" stroke-dasharray="1 1.2"/>
<line x1="467.8" y1="172.3" x2="467.8" y2="387.5" stroke="#626262" stroke-width=".7" stroke-dasharray="1 1.2"/>
<line x1="515.8" y1="172.3" x2="515.8" y2="387.5" stroke="#626262" stroke-width=".7" stroke-dasharray="1 1.2"/>
<line x1="539.8" y1="172.3" x2="539.8" y2="387.5" stroke="#626262" stroke-width=".7" stroke-dasharray="1 1.2"/>
<line x1="563.8" y1="172.3" x2="563.8" y2="387.5" stroke="#626262" stroke-width=".7" stroke-dasharray="1 1.2"/>
<line x1="587.8" y1="172.3" x2="587.8" y2="387.5" stroke="#626262" stroke-width=".7" stroke-dasharray="1 1.2"/>
<line x1="611.8" y1="172.3" x2="611.8" y2="387.5" stroke="#626262" stroke-width=".7" stroke-dasharray="1 1.2"/>
<line x1="353.2" y1="382.5" x2="619.8" y2="382.5" stroke="#626262" stroke-width=".7" stroke-dasharray="1 1.2"/>
<line x1="353.2" y1="358.3" x2="619.8" y2="358.3" stroke="#626262" stroke-width=".7" stroke-dasharray="1 1.2"/>
<line x1="353.2" y1="334.1" x2="619.8" y2="334.1" stroke="#626262" stroke-width=".7" stroke-dasharray="1 1.2"/>
<line x1="353.2" y1="309.9" x2="619.8" y2="309.9" stroke="#626262" stroke-width=".7" stroke-dasharray="1 1.2"/>
<line x1="353.2" y1="285.7" x2="619.8" y2="285.7" stroke="#626262" stroke-width=".7" stroke-dasharray="1 1.2"/>
<line x1="353.2" y1="237.3" x2="619.8" y2="237.3" stroke="#626262" stroke-width=".7" stroke-dasharray="1 1.2"/>
<line x1="353.2" y1="213.1" x2="619.8" y2="213.1" stroke="#626262" stroke-width=".7" stroke-dasharray="1 1.2"/>
<line x1="353.2" y1="188.9" x2="619.8" y2="188.9" stroke="#626262" stroke-width=".7" stroke-dasharray="1 1.2"/>
<line x1="491.8" y1="172.3" x2="491.8" y2="387.5" stroke="#fff" stroke-width="1.1" stroke-dasharray="2.2 1.3"/>
<line x1="353.2" y1="261.5" x2="619.8" y2="261.5" stroke="#fff" stroke-width="1.1" stroke-dasharray="2.2 1.3"/>
<path d="M492 261.5C499.5 253.6 501.0 252.1 514.5 237.8C528.0 223.5 522.0 229.6 532.4 218.7C542.8 207.8 539.9 211.3 545.8 205.1C551.7 198.9 548.3 203.2 550.2 200.2C552.1 197.2 551.5 198.6 551.6 196.2C551.7 193.8 552.0 194.5 550.4 192.9C548.8 191.3 549.9 191.8 546.9 191.4C543.9 191.0 546.1 190.9 541.3 191.7C536.5 192.5 537.6 192.3 532.4 193.9C527.2 195.5 528.7 194.7 525.6 196.6C522.5 198.5 524.3 197.3 523 199.5C521.7 201.7 523.3 201.3 521.6 203.3C519.9 205.3 523.2 203.6 517.8 205.6C512.4 207.6 514.1 207.0 505.5 209.2C496.9 211.4 501.0 210.1 492.1 212.3C483.2 214.5 486.2 213.8 478.7 215.9C471.2 218.0 474.6 216.5 469.7 218.5C464.8 220.5 467.8 218.5 464.1 221.9C460.4 225.3 464.0 222.1 458.5 228.6C453.0 235.1 453.4 235.0 447.5 241.5C441.6 248.0 444.8 243.4 440.9 248C437.0 252.6 438.1 251.4 435.8 255.3C433.5 259.2 434.5 257.0 434.1 259.7C433.7 262.4 433.4 260.9 434.7 263.3C436.0 265.7 434.7 264.8 438 267C441.3 269.2 440.0 268.1 444.6 269.9C449.2 271.7 448.4 270.7 451.9 272.4C455.4 274.1 453.9 272.7 455.1 275C456.3 277.3 456.1 275.5 455.5 279.4C454.9 283.3 455.2 280.4 453.3 286.7C451.4 293.0 452.0 291.0 449.7 298.3C447.4 305.6 448.5 302.0 446.3 308.5C444.1 315.0 444.6 312.0 443.1 317.8C441.6 323.6 441.9 320.8 441.9 325.8C441.9 330.8 442.6 328.1 443.1 332.7C443.6 337.3 444.3 335.3 443.5 339.5C442.7 343.7 444.8 340.3 440.8 345.3C436.8 350.3 437.7 348.3 431.6 354.4C425.5 360.5 427.4 358.6 422.5 363.6C417.6 368.6 419.1 366.0 416.8 369.3C414.5 372.6 415.2 371.0 415.6 373.4C416.0 375.8 415.8 375.3 417.9 376.6C420.0 377.9 419.3 378.1 422 377.3C424.7 376.5 422.7 378.1 425.9 374.3C429.1 370.5 427.4 371.8 431.6 365.9C435.8 360.0 433.5 362.8 438.5 356.7C443.5 350.6 440.8 352.9 446.5 347.6C452.2 342.3 449.6 344.5 455.7 340.7C461.8 336.9 460.2 338.8 464.8 336.1C469.4 333.4 467.5 335.0 469.4 332.7C471.3 330.4 471.0 331.5 470.6 329.2C470.2 326.9 471.4 328.1 468.3 325.8C465.2 323.5 465.4 324.7 461.4 322.4C457.4 320.1 458.5 321.6 456.4 318.9C454.3 316.2 455.0 317.8 455 314.3C455.0 310.8 454.8 313.8 456.4 308.5C458.0 303.2 457.8 305.6 459.9 298.3C462.0 291.0 461.2 294.0 462.8 286.7C464.4 279.4 463.7 282.8 464.7 276.5C465.7 270.2 465.4 272.1 465.7 267.7C466.0 263.3 466.0 265.8 465.7 263.3C465.4 260.8 465.9 261.8 464.7 260.1C463.5 258.4 464.4 259.1 462.1 258.2C459.8 257.3 460.1 258.1 457.7 257.5C455.3 256.9 456.3 257.4 454.8 256.3C453.3 255.2 453.5 255.8 453.3 254.3C453.1 252.8 452.9 253.2 454.1 251.7C455.3 250.2 453.9 251.0 457 249.9C460.1 248.8 458.4 249.1 463.5 248.5C468.6 247.9 467.7 247.8 472.3 248C476.9 248.2 474.7 247.8 477.4 249C480.1 250.2 479.3 249.6 480.3 251.7C481.3 253.8 481.3 252.4 480.3 255.3C479.3 258.2 479.5 256.7 477.4 260.4C475.3 264.1 475.5 263.1 474 266.3C472.5 269.5 472.9 267.9 473 269.9C473.1 271.9 473.0 271.4 474.2 272.4C475.4 273.4 474.4 273.6 476.7 272.8C479.0 272.0 477.1 272.7 481 269.9C484.9 267.1 484.6 267.2 488.3 264.4C492.0 261.6 490.8 262.5 492 261.5" fill="none" stroke="#c8450a" stroke-width="3" stroke-linejoin="round" filter="url(#glow)" opacity=".85"/>
<path d="M492 261.5C499.5 253.6 501.0 252.1 514.5 237.8C528.0 223.5 522.0 229.6 532.4 218.7C542.8 207.8 539.9 211.3 545.8 205.1C551.7 198.9 548.3 203.2 550.2 200.2C552.1 197.2 551.5 198.6 551.6 196.2C551.7 193.8 552.0 194.5 550.4 192.9C548.8 191.3 549.9 191.8 546.9 191.4C543.9 191.0 546.1 190.9 541.3 191.7C536.5 192.5 537.6 192.3 532.4 193.9C527.2 195.5 528.7 194.7 525.6 196.6C522.5 198.5 524.3 197.3 523 199.5C521.7 201.7 523.3 201.3 521.6 203.3C519.9 205.3 523.2 203.6 517.8 205.6C512.4 207.6 514.1 207.0 505.5 209.2C496.9 211.4 501.0 210.1 492.1 212.3C483.2 214.5 486.2 213.8 478.7 215.9C471.2 218.0 474.6 216.5 469.7 218.5C464.8 220.5 467.8 218.5 464.1 221.9C460.4 225.3 464.0 222.1 458.5 228.6C453.0 235.1 453.4 235.0 447.5 241.5C441.6 248.0 444.8 243.4 440.9 248C437.0 252.6 438.1 251.4 435.8 255.3C433.5 259.2 434.5 257.0 434.1 259.7C433.7 262.4 433.4 260.9 434.7 263.3C436.0 265.7 434.7 264.8 438 267C441.3 269.2 440.0 268.1 444.6 269.9C449.2 271.7 448.4 270.7 451.9 272.4C455.4 274.1 453.9 272.7 455.1 275C456.3 277.3 456.1 275.5 455.5 279.4C454.9 283.3 455.2 280.4 453.3 286.7C451.4 293.0 452.0 291.0 449.7 298.3C447.4 305.6 448.5 302.0 446.3 308.5C444.1 315.0 444.6 312.0 443.1 317.8C441.6 323.6 441.9 320.8 441.9 325.8C441.9 330.8 442.6 328.1 443.1 332.7C443.6 337.3 444.3 335.3 443.5 339.5C442.7 343.7 444.8 340.3 440.8 345.3C436.8 350.3 437.7 348.3 431.6 354.4C425.5 360.5 427.4 358.6 422.5 363.6C417.6 368.6 419.1 366.0 416.8 369.3C414.5 372.6 415.2 371.0 415.6 373.4C416.0 375.8 415.8 375.3 417.9 376.6C420.0 377.9 419.3 378.1 422 377.3C424.7 376.5 422.7 378.1 425.9 374.3C429.1 370.5 427.4 371.8 431.6 365.9C435.8 360.0 433.5 362.8 438.5 356.7C443.5 350.6 440.8 352.9 446.5 347.6C452.2 342.3 449.6 344.5 455.7 340.7C461.8 336.9 460.2 338.8 464.8 336.1C469.4 333.4 467.5 335.0 469.4 332.7C471.3 330.4 471.0 331.5 470.6 329.2C470.2 326.9 471.4 328.1 468.3 325.8C465.2 323.5 465.4 324.7 461.4 322.4C457.4 320.1 458.5 321.6 456.4 318.9C454.3 316.2 455.0 317.8 455 314.3C455.0 310.8 454.8 313.8 456.4 308.5C458.0 303.2 457.8 305.6 459.9 298.3C462.0 291.0 461.2 294.0 462.8 286.7C464.4 279.4 463.7 282.8 464.7 276.5C465.7 270.2 465.4 272.1 465.7 267.7C466.0 263.3 466.0 265.8 465.7 263.3C465.4 260.8 465.9 261.8 464.7 260.1C463.5 258.4 464.4 259.1 462.1 258.2C459.8 257.3 460.1 258.1 457.7 257.5C455.3 256.9 456.3 257.4 454.8 256.3C453.3 255.2 453.5 255.8 453.3 254.3C453.1 252.8 452.9 253.2 454.1 251.7C455.3 250.2 453.9 251.0 457 249.9C460.1 248.8 458.4 249.1 463.5 248.5C468.6 247.9 467.7 247.8 472.3 248C476.9 248.2 474.7 247.8 477.4 249C480.1 250.2 479.3 249.6 480.3 251.7C481.3 253.8 481.3 252.4 480.3 255.3C479.3 258.2 479.5 256.7 477.4 260.4C475.3 264.1 475.5 263.1 474 266.3C472.5 269.5 472.9 267.9 473 269.9C473.1 271.9 473.0 271.4 474.2 272.4C475.4 273.4 474.4 273.6 476.7 272.8C479.0 272.0 477.1 272.7 481 269.9C484.9 267.1 484.6 267.2 488.3 264.4C492.0 261.6 490.8 262.5 492 261.5" fill="none" stroke="#fb7420" stroke-width="1.6" stroke-linejoin="round"/>
<path d="M487 242.7H496.8V255.3L492 261.4L487 255.3Z" fill="#ffdf10" stroke="#e8a800" stroke-width=".6"/>
<text x="491.9" y="251.8" font-size="5.4" font-weight="bold" text-anchor="middle" fill="#e8401a">Rx</text>
<text x="492.5" y="180.6" font-size="8.6" fill="#c4c4c4">N /m</text>
<text x="543" y="270" font-size="8.6" fill="#c4c4c4">E /m</text>
<text x="493.6" y="270" font-size="8.6" fill="#b8b8b8">O</text>
<text x="335.7" y="191.5" font-size="9.1" font-weight="bold" fill="#111" textLength="12.3" lengthAdjust="spacingAndGlyphs">600</text>
<text x="335.7" y="215.7" font-size="9.1" font-weight="bold" fill="#111" textLength="12.3" lengthAdjust="spacingAndGlyphs">400</text>
<text x="335.7" y="239.9" font-size="9.1" font-weight="bold" fill="#111" textLength="12.3" lengthAdjust="spacingAndGlyphs">200</text>
<text x="342.8" y="264.1" font-size="9.1" font-weight="bold" fill="#fff" textLength="5.2" lengthAdjust="spacingAndGlyphs">0</text>
<text x="333.2" y="288.3" font-size="9.1" font-weight="bold" fill="#111" textLength="14.8" lengthAdjust="spacingAndGlyphs">-200</text>
<text x="333.2" y="312.5" font-size="9.1" font-weight="bold" fill="#111" textLength="14.8" lengthAdjust="spacingAndGlyphs">-400</text>
<text x="333.2" y="336.7" font-size="9.1" font-weight="bold" fill="#111" textLength="14.8" lengthAdjust="spacingAndGlyphs">-600</text>
<text x="333.2" y="360.9" font-size="9.1" font-weight="bold" fill="#111" textLength="14.8" lengthAdjust="spacingAndGlyphs">-800</text>
<text x="329.4" y="385.1" font-size="9.1" font-weight="bold" fill="#111" textLength="18.6" lengthAdjust="spacingAndGlyphs">-1000</text>
<text x="362.5" y="399.7" font-size="9.1" font-weight="bold" fill="#111" textLength="18.6" lengthAdjust="spacingAndGlyphs">-1000</text>
<text x="388.4" y="399.7" font-size="9.1" font-weight="bold" fill="#111" textLength="14.8" lengthAdjust="spacingAndGlyphs">-800</text>
<text x="412.4" y="399.7" font-size="9.1" font-weight="bold" fill="#111" textLength="14.8" lengthAdjust="spacingAndGlyphs">-600</text>
<text x="436.4" y="399.7" font-size="9.1" font-weight="bold" fill="#111" textLength="14.8" lengthAdjust="spacingAndGlyphs">-400</text>
<text x="460.4" y="399.7" font-size="9.1" font-weight="bold" fill="#111" textLength="14.8" lengthAdjust="spacingAndGlyphs">-200</text>
<text x="489.2" y="399.7" font-size="9.1" font-weight="bold" fill="#fff" textLength="5.2" lengthAdjust="spacingAndGlyphs">0</text>
<text x="509.6" y="399.7" font-size="9.1" font-weight="bold" fill="#111" textLength="12.3" lengthAdjust="spacingAndGlyphs">200</text>
<text x="533.6" y="399.7" font-size="9.1" font-weight="bold" fill="#111" textLength="12.3" lengthAdjust="spacingAndGlyphs">400</text>
<text x="557.6" y="399.7" font-size="9.1" font-weight="bold" fill="#111" textLength="12.3" lengthAdjust="spacingAndGlyphs">600</text>
<text x="581.6" y="399.7" font-size="9.1" font-weight="bold" fill="#111" textLength="12.3" lengthAdjust="spacingAndGlyphs">800</text>
<path d="M605.5 170.5V179.5L607.6 177.6L609.2 181L610.6 180.3L609.1 177L611.8 176.8Z" fill="#fff" stroke="#111" stroke-width=".7"/>
</svg>
<div id="status" style="left:4.1px;top:406.7px;width:617.9px;height:18.2px;background:#e9edf1;border-top:1.2px solid #98a2ab;box-sizing:border-box;"></div>
<div class="t " style="left:5px;top:411.2px;font-size:12.6px;transform:scaleX(.929);">(V1) P:50.33255°N 6.94296°E -0.0m</div>
<div class="t " style="left:275px;top:411.2px;font-size:12.6px;transform:scaleX(.935);">(V1) V:0.00 m/s</div>
<div class="t " style="left:476px;top:411.2px;font-size:12.6px;transform:scaleX(.945);">T: 19.02.2014 06:00:00.000</div>
<div id="task" style="left:4.2px;top:424.7px;width:617.8px;height:48.3px;background:#6d8399;border-radius:0 0 3px 3px;border-top:1px solid #3b4956;box-sizing:border-box;"></div>
<div style="left:300.2px;top:425px;width:1px;height:48px;background:#4a5a69;"></div><div style="left:301.2px;top:425px;width:1px;height:48px;background:#8ea0b2;"></div>
<div style="left:374.9px;top:425px;width:1px;height:48px;background:#4a5a69;"></div><div style="left:375.9px;top:425px;width:1px;height:48px;background:#8ea0b2;"></div>
<div style="left:449.6px;top:425px;width:1px;height:48px;background:#4a5a69;"></div><div style="left:450.6px;top:425px;width:1px;height:48px;background:#8ea0b2;"></div>
<div style="left:524.2px;top:425px;width:1px;height:48px;background:#4a5a69;"></div><div style="left:525.2px;top:425px;width:1px;height:48px;background:#8ea0b2;"></div>
<div style="left:599.2px;top:425px;width:1px;height:48px;background:#4a5a69;"></div><div style="left:600.2px;top:425px;width:1px;height:48px;background:#8ea0b2;"></div>
<svg style="left:6px;top:435px" width="28" height="28" viewBox="6 435 28 28"><defs><linearGradient id="sc" x1="0" y1="0" x2="0" y2="1"><stop offset="0" stop-color="#97aabd"/><stop offset=".5" stop-color="#8196ab"/><stop offset=".52" stop-color="#788ea4"/><stop offset="1" stop-color="#7b91a7"/></linearGradient></defs><circle cx="19.75" cy="449" r="11.6" fill="url(#sc)" stroke="#5b6f83" stroke-width=".7"/><g fill="#cfdde8" opacity=".9"><rect x="12.7" y="450.9" width="2.7" height="2.5"/><rect x="19.3" y="450.9" width="2.6" height="2.5"/><rect x="12.7" y="454" width="2.7" height="2.4"/><rect x="19.3" y="454" width="2.6" height="2.4"/></g><path d="M-1.09 -4.88 L-0.93 -6.53 L0.93 -6.53 L1.09 -4.88 L1.99 -4.59 L3.09 -5.83 L4.59 -4.74 L3.75 -3.31 L4.30 -2.55 L5.93 -2.90 L6.50 -1.13 L4.98 -0.47 L4.98 0.47 L6.50 1.13 L5.93 2.90 L4.30 2.55 L3.75 3.31 L4.59 4.74 L3.09 5.83 L1.99 4.59 L1.09 4.88 L0.93 6.53 L-0.93 6.53 L-1.09 4.88 L-1.99 4.59 L-3.09 5.83 L-4.59 4.74 L-3.75 3.31 L-4.30 2.55 L-5.93 2.90 L-6.50 1.13 L-4.98 0.47 L-4.98 -0.47 L-6.50 -1.13 L-5.93 -2.90 L-4.30 -2.55 L-3.75 -3.31 L-4.59 -4.74 L-3.09 -5.83 L-1.99 -4.59Z" transform="translate(22.8,446.8) rotate(9)" fill="#188dd0"/><path d="M19.6 449.8L16.2 455.8L18.2 456.8L21.3 451.2Z" fill="#188dd0" stroke="#188dd0" stroke-width=".8" stroke-linejoin="round"/><circle cx="22.9" cy="446.6" r="2.3" fill="#6a8ba8"/></svg>
<div class="t " style="left:32px;top:437.2px;font-size:12.6px;transform:scaleX(.92);-webkit-text-stroke:.25px #000;">System</div>
<div class="t " style="left:32.4px;top:450.9px;font-size:12.6px;transform:scaleX(.92);-webkit-text-stroke:.25px #000;">Config</div>
<div style="left:76px;top:425px;width:1px;height:48px;background:#8ea0b2;"></div>
<div style="left:77.6px;top:425px;width:73.2px;height:48px;background:#758ba2;"></div>
<div style="left:77.8px;top:425.2px;width:72.8px;height:38.2px;background:#a3afba;border:1.6px solid #c2d4e2;box-sizing:border-box;"></div>
<div style="left:79.6px;top:426.5px;width:69px;height:3.5px;background:#74889c;"></div>
<div style="left:79.6px;top:430px;width:69px;height:5.5px;background:#8a9caf;"></div>
<div style="left:81px;top:431px;width:6px;height:3.5px;background:#e8edf1;"></div>
<div style="left:113.5px;top:431px;width:5px;height:3.5px;background:#e3c6d6;border-radius:1px;"></div>
<div style="left:121.5px;top:431px;width:5px;height:3.5px;background:#e3c6d6;border-radius:1px;"></div>
<div style="left:131px;top:431px;width:5px;height:3.5px;background:#e3c6d6;border-radius:1px;"></div>
<div style="left:139.5px;top:431px;width:5px;height:3.5px;background:#e3c6d6;border-radius:1px;"></div>
<div style="left:115.5px;top:439.5px;width:31px;height:4px;background:#f4f6f8;"></div>
<div style="left:80.5px;top:444px;width:34px;height:3.5px;background:#bcc6cf;"></div><div style="left:80.5px;top:444px;width:3px;height:3.5px;background:#8fa2c4;"></div>
<div style="left:80.5px;top:448.5px;width:34px;height:3.5px;background:#bcc6cf;"></div><div style="left:80.5px;top:448.5px;width:3px;height:3.5px;background:#d6a6bf;"></div>
<div style="left:80.5px;top:452.5px;width:34px;height:3.5px;background:#bcc6cf;"></div><div style="left:80.5px;top:452.5px;width:3px;height:3.5px;background:#d6a6bf;"></div>
<div class="t " style="left:101.8px;top:464.1px;font-size:9.7px;font-weight:bold;color:#0f1820;transform:scaleX(.93);">GNSS</div>
<div style="left:151.5px;top:425px;width:1px;height:48px;background:#5b6e80;"></div>
<div style="left:152.3px;top:425px;width:75px;height:48px;background:#758ba2;"></div>
<div style="left:152.4px;top:425.2px;width:74.4px;height:38px;background:#dce2e7;border:1.2px solid #cfe0ec;border-left-width:2.2px;border-right-width:2.2px;box-sizing:border-box;"></div>
<svg style="left:153px;top:425px" width="74" height="39" viewBox="153 425 74 39"><rect x="154.5" y="426.5" width="70.5" height="2" fill="#7a8ea2"/><rect x="155" y="429.5" width="13" height="3" fill="#fff" stroke="#e8a050" stroke-width=".5"/><rect x="173" y="429.3" width="4" height="3.2" fill="#6d8fd0"/><rect x="178.5" y="429.5" width="8" height="3" fill="#c9d2da"/><rect x="193" y="429.5" width="10" height="3" fill="#fff"/><rect x="213" y="429.3" width="4" height="3.2" fill="#6d8fd0"/><rect x="218" y="429.5" width="7" height="3" fill="#c9d2da"/><line x1="188.6" y1="428.5" x2="188.6" y2="462" stroke="#555" stroke-width=".6"/><circle cx="170.6" cy="447.2" r="11.9" fill="#02030c"/><ellipse cx="165.9" cy="435.4" rx="1.9" ry="1.1" fill="#1a34c4" opacity=".9"/><ellipse cx="174.9" cy="435.9" rx="1.9" ry="1.1" fill="#1a34c4" opacity=".9"/><ellipse cx="177.4" cy="438.9" rx="1.9" ry="1.1" fill="#1a34c4" opacity=".9"/><ellipse cx="176.4" cy="440.9" rx="1.9" ry="1.1" fill="#1a34c4" opacity=".9"/><ellipse cx="174.9" cy="442.9" rx="1.9" ry="1.1" fill="#1a34c4" opacity=".9"/><ellipse cx="176.9" cy="444.4" rx="1.9" ry="1.1" fill="#1a34c4" opacity=".9"/><ellipse cx="158.9" cy="443.4" rx="1.9" ry="1.1" fill="#1a34c4" opacity=".9"/><ellipse cx="163.4" cy="442.4" rx="1.9" ry="1.1" fill="#1a34c4" opacity=".9"/><ellipse cx="166.4" cy="441.9" rx="1.9" ry="1.1" fill="#1a34c4" opacity=".9"/><ellipse cx="164.4" cy="446.4" rx="1.9" ry="1.1" fill="#1a34c4" opacity=".9"/><ellipse cx="167.9" cy="446.9" rx="1.9" ry="1.1" fill="#1a34c4" opacity=".9"/><ellipse cx="172.4" cy="446.4" rx="1.9" ry="1.1" fill="#1a34c4" opacity=".9"/><ellipse cx="171.9" cy="448.4" rx="1.9" ry="1.1" fill="#1a34c4" opacity=".9"/><ellipse cx="178.4" cy="446.9" rx="1.9" ry="1.1" fill="#1a34c4" opacity=".9"/><ellipse cx="180.4" cy="446.4" rx="1.9" ry="1.1" fill="#1a34c4" opacity=".9"/><ellipse cx="179.4" cy="448.4" rx="1.9" ry="1.1" fill="#1a34c4" opacity=".9"/><ellipse cx="164.4" cy="451.9" rx="1.9" ry="1.1" fill="#1a34c4" opacity=".9"/><ellipse cx="168.4" cy="452.4" rx="1.9" ry="1.1" fill="#1a34c4" opacity=".9"/><ellipse cx="171.4" cy="451.4" rx="1.9" ry="1.1" fill="#1a34c4" opacity=".9"/><ellipse cx="182.4" cy="451.4" rx="1.9" ry="1.1" fill="#1a34c4" opacity=".9"/><ellipse cx="177.9" cy="453.9" rx="1.9" ry="1.1" fill="#1a34c4" opacity=".9"/><ellipse cx="163.4" cy="454.9" rx="1.9" ry="1.1" fill="#1a34c4" opacity=".9"/><ellipse cx="167.4" cy="455.9" rx="1.9" ry="1.1" fill="#1a34c4" opacity=".9"/><ellipse cx="172.4" cy="455.4" rx="1.9" ry="1.1" fill="#1a34c4" opacity=".9"/><ellipse cx="174.9" cy="455.9" rx="1.9" ry="1.1" fill="#1a34c4" opacity=".9"/><ellipse cx="176.4" cy="457.4" rx="1.9" ry="1.1" fill="#1a34c4" opacity=".9"/><ellipse cx="168.4" cy="459.4" rx="1.9" ry="1.1" fill="#1a34c4" opacity=".9"/><rect x="193.2" y="435.1" width="29.9" height="23.5" fill="#000"/><line x1="208.8" y1="435.1" x2="208.8" y2="458.6" stroke="#bbb" stroke-width=".35"/><line x1="193.2" y1="444.3" x2="223.1" y2="444.3" stroke="#bbb" stroke-width=".35"/><path d="M492 261.5C499.5 253.6 501.0 252.1 514.5 237.8C528.0 223.5 522.0 229.6 532.4 218.7C542.8 207.8 539.9 211.3 545.8 205.1C551.7 198.9 548.3 203.2 550.2 200.2C552.1 197.2 551.5 198.6 551.6 196.2C551.7 193.8 552.0 194.5 550.4 192.9C548.8 191.3 549.9 191.8 546.9 191.4C543.9 191.0 546.1 190.9 541.3 191.7C536.5 192.5 537.6 192.3 532.4 193.9C527.2 195.5 528.7 194.7 525.6 196.6C522.5 198.5 524.3 197.3 523 199.5C521.7 201.7 523.3 201.3 521.6 203.3C519.9 205.3 523.2 203.6 517.8 205.6C512.4 207.6 514.1 207.0 505.5 209.2C496.9 211.4 501.0 210.1 492.1 212.3C483.2 214.5 486.2 213.8 478.7 215.9C471.2 218.0 474.6 216.5 469.7 218.5C464.8 220.5 467.8 218.5 464.1 221.9C460.4 225.3 464.0 222.1 458.5 228.6C453.0 235.1 453.4 235.0 447.5 241.5C441.6 248.0 444.8 243.4 440.9 248C437.0 252.6 438.1 251.4 435.8 255.3C433.5 259.2 434.5 257.0 434.1 259.7C433.7 262.4 433.4 260.9 434.7 263.3C436.0 265.7 434.7 264.8 438 267C441.3 269.2 440.0 268.1 444.6 269.9C449.2 271.7 448.4 270.7 451.9 272.4C455.4 274.1 453.9 272.7 455.1 275C456.3 277.3 456.1 275.5 455.5 279.4C454.9 283.3 455.2 280.4 453.3 286.7C451.4 293.0 452.0 291.0 449.7 298.3C447.4 305.6 448.5 302.0 446.3 308.5C444.1 315.0 444.6 312.0 443.1 317.8C441.6 323.6 441.9 320.8 441.9 325.8C441.9 330.8 442.6 328.1 443.1 332.7C443.6 337.3 444.3 335.3 443.5 339.5C442.7 343.7 444.8 340.3 440.8 345.3C436.8 350.3 437.7 348.3 431.6 354.4C425.5 360.5 427.4 358.6 422.5 363.6C417.6 368.6 419.1 366.0 416.8 369.3C414.5 372.6 415.2 371.0 415.6 373.4C416.0 375.8 415.8 375.3 417.9 376.6C420.0 377.9 419.3 378.1 422 377.3C424.7 376.5 422.7 378.1 425.9 374.3C429.1 370.5 427.4 371.8 431.6 365.9C435.8 360.0 433.5 362.8 438.5 356.7C443.5 350.6 440.8 352.9 446.5 347.6C452.2 342.3 449.6 344.5 455.7 340.7C461.8 336.9 460.2 338.8 464.8 336.1C469.4 333.4 467.5 335.0 469.4 332.7C471.3 330.4 471.0 331.5 470.6 329.2C470.2 326.9 471.4 328.1 468.3 325.8C465.2 323.5 465.4 324.7 461.4 322.4C457.4 320.1 458.5 321.6 456.4 318.9C454.3 316.2 455.0 317.8 455 314.3C455.0 310.8 454.8 313.8 456.4 308.5C458.0 303.2 457.8 305.6 459.9 298.3C462.0 291.0 461.2 294.0 462.8 286.7C464.4 279.4 463.7 282.8 464.7 276.5C465.7 270.2 465.4 272.1 465.7 267.7C466.0 263.3 466.0 265.8 465.7 263.3C465.4 260.8 465.9 261.8 464.7 260.1C463.5 258.4 464.4 259.1 462.1 258.2C459.8 257.3 460.1 258.1 457.7 257.5C455.3 256.9 456.3 257.4 454.8 256.3C453.3 255.2 453.5 255.8 453.3 254.3C453.1 252.8 452.9 253.2 454.1 251.7C455.3 250.2 453.9 251.0 457 249.9C460.1 248.8 458.4 249.1 463.5 248.5C468.6 247.9 467.7 247.8 472.3 248C476.9 248.2 474.7 247.8 477.4 249C480.1 250.2 479.3 249.6 480.3 251.7C481.3 253.8 481.3 252.4 480.3 255.3C479.3 258.2 479.5 256.7 477.4 260.4C475.3 264.1 475.5 263.1 474 266.3C472.5 269.5 472.9 267.9 473 269.9C473.1 271.9 473.0 271.4 474.2 272.4C475.4 273.4 474.4 273.6 476.7 272.8C479.0 272.0 477.1 272.7 481 269.9C484.9 267.1 484.6 267.2 488.3 264.4C492.0 261.6 490.8 262.5 492 261.5" transform="translate(208.8,444.3) scale(.118) translate(-492,-261.5)" fill="none" stroke="#d07a34" stroke-width="7"/><circle cx="208.8" cy="443.7" r="1" fill="#ffe11a"/><rect x="215" y="459.5" width="8" height="2.6" fill="#c9d2da"/><rect x="178" y="459" width="8" height="2.6" fill="#c9d2da"/></svg>
<div class="t " style="left:158.7px;top:464.1px;font-size:9.7px;font-weight:bold;color:#0f1820;transform:scaleX(.93);">GNSS Monitor</div>
<div style="left:227.3px;top:425px;width:1px;height:48px;background:#4a5a69;"></div>
<div style="left:228.3px;top:425px;width:72px;height:48px;background:radial-gradient(ellipse 36px 22px at 50% 50%,#485a6b 0%,#5d7185 55%,#6d8399 100%);"></div>
<div style="left:264.4px;top:425px;width:1px;height:48px;background:rgba(200,215,228,.35);"></div>
<div style="left:228.3px;top:448.3px;width:72px;height:1px;background:rgba(200,215,228,.35);"></div>
<svg style="left:228px;top:425px" width="73" height="48" viewBox="228 425 73 48"><defs><linearGradient id="sg" x1="228" x2="301" gradientUnits="userSpaceOnUse"><stop offset="0" stop-color="#e6df62" stop-opacity=".12"/><stop offset=".18" stop-color="#e6df62" stop-opacity=".6"/><stop offset=".4" stop-color="#ece464" stop-opacity=".95"/><stop offset=".66" stop-color="#f0e868" stop-opacity="1"/><stop offset=".82" stop-color="#d8d884" stop-opacity=".55"/><stop offset="1" stop-color="#c0cca0" stop-opacity=".12"/></linearGradient></defs><path d="M230.3 435.4 L230.8 435.4 L231.3 435.5 L231.8 435.7 L232.3 435.9 L232.8 436.2 L233.3 436.6 L233.8 437.0 L234.3 437.5 L234.8 438.0 L235.3 438.6 L235.8 439.3 L236.3 439.9 L236.8 440.7 L237.3 441.5 L237.8 442.3 L238.3 443.1 L238.8 444.0 L239.3 444.9 L239.8 445.8 L240.3 446.8 L240.8 447.7 L241.3 448.7 L241.8 449.6 L242.3 450.6 L242.8 451.5 L243.3 452.5 L243.8 453.4 L244.3 454.3 L244.8 455.2 L245.3 456.0 L245.8 456.9 L246.3 457.6 L246.8 458.4 L247.3 459.1 L247.8 459.7 L248.3 460.3 L248.8 460.9 L249.3 461.3 L249.8 461.8 L250.3 462.1 L250.8 462.4 L251.3 462.7 L251.8 462.9 L252.3 463.0 L252.8 463.0 L253.3 463.0 L253.8 462.9 L254.3 462.7 L254.8 462.5 L255.3 462.2 L255.8 461.9 L256.3 461.4 L256.8 461.0 L257.3 460.4 L257.8 459.8 L258.3 459.2 L258.8 458.5 L259.3 457.8 L259.8 457.0 L260.3 456.2 L260.8 455.4 L261.3 454.5 L261.8 453.6 L262.3 452.7 L262.8 451.7 L263.3 450.8 L263.8 449.8 L264.3 448.9 L264.8 447.9 L265.3 447.0 L265.8 446.0 L266.3 445.1 L266.8 444.2 L267.3 443.3 L267.8 442.4 L268.3 441.6 L268.8 440.8 L269.3 440.1 L269.8 439.4 L270.3 438.7 L270.8 438.1 L271.3 437.6 L271.8 437.1 L272.3 436.7 L272.8 436.3 L273.3 436.0 L273.8 435.7 L274.3 435.6 L274.8 435.4 L275.3 435.4 L275.8 435.4 L276.3 435.5 L276.8 435.7 L277.3 435.9 L277.8 436.2 L278.3 436.5 L278.8 436.9 L279.3 437.4 L279.8 437.9 L280.3 438.5 L280.8 439.1 L281.3 439.8 L281.8 440.5 L282.3 441.3 L282.8 442.1 L283.3 442.9 L283.8 443.8 L284.3 444.7 L284.8 445.6 L285.3 446.6 L285.8 447.5 L286.3 448.5 L286.8 449.4 L287.3 450.4 L287.8 451.4 L288.3 452.3 L288.8 453.2 L289.3 454.1 L289.8 455.0 L290.3 455.9 L290.8 456.7 L291.3 457.5 L291.8 458.2 L292.3 458.9 L292.8 459.6 L293.3 460.2 L293.8 460.8 L294.3 461.3 L294.8 461.7 L295.3 462.1 L295.8 462.4 L296.3 462.6 L296.8 462.8" fill="none" stroke="url(#sg)" stroke-width="1.3"/></svg>
<div style="left:601px;top:425.5px;width:22px;height:47.5px;background:radial-gradient(ellipse 16px 26px at 50% 50%,#56697b 0%,#63788c 60%,#6d8399 100%);border-radius:0 0 3px 0;"></div>
<svg style="left:600px;top:425px" width="24" height="48" viewBox="600 425 24 48"><line x1="612.5" y1="425" x2="612.5" y2="473" stroke="#8fa2b4" stroke-width=".8"/><line x1="601" y1="449.4" x2="623" y2="449.4" stroke="#8fa2b4" stroke-width=".8"/><rect x="603.2" y="442.7" width="5.6" height="5.1" fill="#d9dfe4"/><rect x="615.6" y="442.7" width="5.5" height="5.1" fill="#d9dfe4"/><rect x="603.2" y="450.6" width="5.6" height="5" fill="#d9dfe4"/><rect x="615.6" y="450.6" width="5.5" height="5" fill="#d9dfe4"/><rect x="610" y="442" width="4.6" height="14.5" rx="2.2" fill="#1590cc"/></svg>
</div>
</body></html>
